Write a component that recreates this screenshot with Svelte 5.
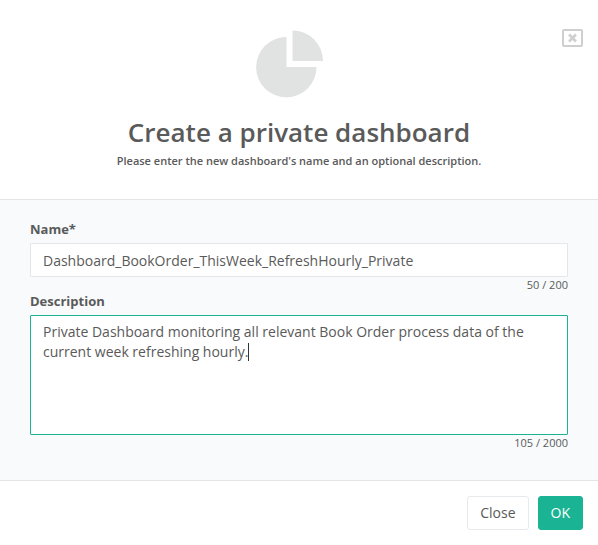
<script lang="ts">
  import { onMount } from 'svelte';

  const nameLimit = 200;
  const descriptionLimit = 2000;

  let name = $state('Dashboard_BookOrder_ThisWeek_RefreshHourly_Private');
  let description = $state(
    'Private Dashboard monitoring all relevant Book Order process data of the \ncurrent week refreshing hourly.'
  );
  let caret = $state(0);
  let descriptionField: HTMLTextAreaElement;

  function updateCaret() {
    caret = descriptionField.selectionEnd;
  }

  onMount(() => {
    descriptionField.focus();
    descriptionField.setSelectionRange(description.length, description.length);
    updateCaret();
  });
</script>

<form class="modal" onsubmit={(event) => event.preventDefault()}>
  <header class="modal-header">
    <button type="button" class="dismiss" aria-label="Dismiss">
      <svg width="22" height="18" viewBox="0 0 22 18" fill="none" stroke="#cfcfcf">
        <rect x="1" y="1" width="19" height="16" rx="1" stroke-width="2" />
        <path d="M7 5.5l7 7M14 5.5l-7 7" stroke-width="2.6" />
      </svg>
    </button>
    <svg class="pie" width="68" height="68" viewBox="0 0 68 68" fill="#e1e3e2" aria-hidden="true">
      <path d="M30.5 7A30.2 30.2 0 1 0 60.5 37H30.5Z" />
      <path d="M36.5 0.5A30.5 30.5 0 0 1 67 31H36.5Z" />
    </svg>
    <h1>Create a private dashboard</h1>
    <p>Please enter the new dashboard's name and an optional description.</p>
  </header>

  <div class="modal-body">
    <label for="name">Name*</label>
    <input id="name" type="text" maxlength={nameLimit} spellcheck="false" bind:value={name} />
    <div class="counter">{name.length} / {nameLimit}</div>

    <label for="description">Description</label>
    <div class="editor">
      <textarea
        id="description"
        maxlength={descriptionLimit}
        spellcheck="false"
        bind:value={description}
        bind:this={descriptionField}
        oninput={updateCaret}
        onkeyup={updateCaret}
        onclick={updateCaret}
      ></textarea>
      <!-- repeats the text up to the cursor so the caret lands after it -->
      <div class="mirror" aria-hidden="true">{description.slice(0, caret)}<span class="caret"></span></div>
    </div>
    <div class="counter">{description.length} / {descriptionLimit}</div>
  </div>

  <footer class="modal-footer">
    <button type="button" class="btn">Close</button>
    <button type="submit" class="btn primary">OK</button>
  </footer>
</form>

<style>
  :global(body) {
    background: #fff;
  }

  .modal {
    color: #5a5a5a;
    font-family: 'Open Sans', sans-serif;
    font-size: 14px;
    line-height: 20px;
  }

  .modal-header {
    position: relative;
    display: flex;
    flex-direction: column;
    align-items: center;
    padding: 30px 16px 29px;
    border-bottom: 1px solid #e5e5e5;
    text-align: center;
  }

  .dismiss {
    position: absolute;
    top: 29px;
    right: 14px;
    padding: 0;
    border: 0;
    background: none;
    line-height: 0;
    cursor: pointer;
  }

  .pie {
    margin-left: -18px;
  }

  h1 {
    margin: 20px 0 5px;
    font-size: 26px;
    font-weight: 600;
    line-height: 29px;
  }

  p {
    margin: 0;
    font-size: 11px;
    font-weight: 600;
    line-height: 18px;
  }

  .modal-body {
    display: flex;
    flex-direction: column;
    padding: 20px 30px 30px;
    border-bottom: 1px solid #e5e5e5;
    background: #f8fafc;
  }

  label {
    margin-bottom: 5px;
    font-size: 13px;
    font-weight: 700;
    line-height: 18px;
  }

  .editor {
    position: relative;
    display: flex;
  }

  input,
  textarea,
  .mirror {
    box-sizing: border-box;
    width: 100%;
    padding: 6px 12px;
    border: 1px solid #e5e6e7;
    border-radius: 1px;
    outline: 0;
    background: #fff;
    color: inherit;
    font: inherit;
  }

  input {
    height: 34px;
  }

  textarea {
    height: 120px;
    resize: none;
    caret-color: transparent;
  }

  input:focus,
  textarea:focus {
    border-color: #1ab394;
  }

  .mirror {
    position: absolute;
    inset: 0;
    overflow: hidden;
    visibility: hidden;
    white-space: pre-wrap;
    overflow-wrap: break-word;
    pointer-events: none;
  }

  .caret {
    display: inline-block;
    width: 1px;
    height: 18px;
    margin-right: -1px;
    background: #333;
    vertical-align: text-bottom;
  }

  textarea:focus + .mirror .caret {
    visibility: visible;
  }

  .counter {
    font-size: 11px;
    line-height: 15px;
    text-align: right;
  }

  .modal-footer {
    display: flex;
    justify-content: flex-end;
    gap: 9px;
    padding: 15px;
  }

  .btn {
    padding: 6px 12px;
    border: 1px solid #e7eaec;
    border-radius: 3px;
    background: #fff;
    color: inherit;
    font: inherit;
    cursor: pointer;
  }

  .primary {
    border-color: #1ab394;
    background: #1ab394;
    color: #fff;
  }
</style>
